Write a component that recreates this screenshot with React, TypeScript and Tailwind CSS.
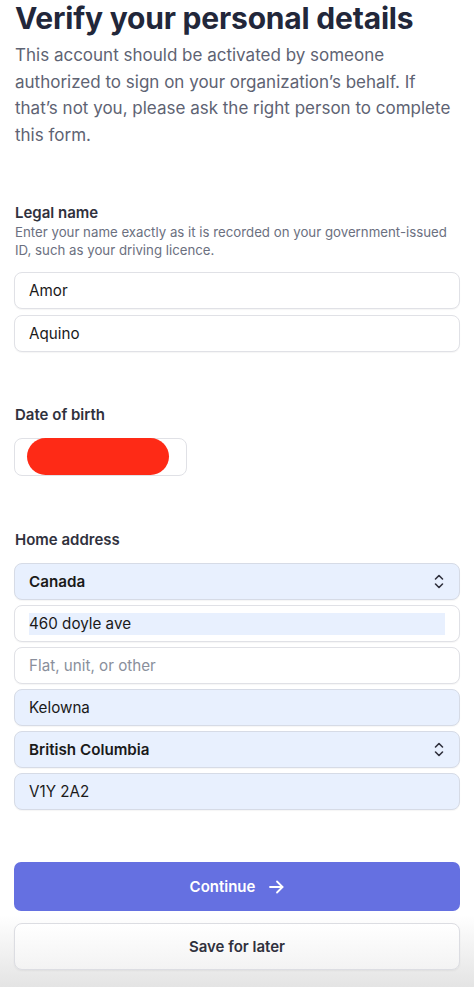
const font = { fontFamily: "Inter, 'Noto Sans', sans-serif" };

const UpDown = () => (
  <svg width="10" height="15" viewBox="0 0 10 15" fill="none" stroke="#30313d" strokeWidth="1.6" strokeLinecap="round" strokeLinejoin="round">
    <path d="M1.5 5 L5 1.5 L8.5 5" />
    <path d="M1.5 10 L5 13.5 L8.5 10" />
  </svg>
);

const Field = ({
  value,
  placeholder,
  filled,
  select,
  bold,
  highlight,
}: {
  value?: string;
  placeholder?: string;
  filled?: boolean;
  select?: boolean;
  bold?: boolean;
  highlight?: boolean;
}) => (
  <div
    className={`w-full h-[37px] rounded-[8px] border flex items-center px-[14px] shadow-[0_1px_1px_rgba(0,0,0,0.04)] ${
      filled ? "bg-[#e8f0fe] border-[#d6dbe6]" : "bg-white border-[#e0e1e6]"
    }`}
  >
    <div className={`flex-1 flex items-center h-[22px] mt-[2px] ${highlight ? "bg-[#e8f0fe]" : ""}`}>
      <span
        className={`text-[15.2px] leading-[20px] ${
          value ? "text-[#1a1a1a]" : "text-[#8a8f9c]"
        } ${bold ? "font-semibold" : ""}`}
      >
        {value ?? placeholder}
      </span>
    </div>
    {select && (
      <div className="ml-[8px] mr-[1px]">
        <UpDown />
      </div>
    )}
  </div>
);

const Label = ({ children }: { children: React.ReactNode }) => (
  <h2 className="text-[15px] leading-[20px] font-semibold text-[#30313d]">{children}</h2>
);

export default function App() {
  return (
    <div className="w-[474px] min-h-[987px] bg-white flex flex-col" style={font}>
      <div className="px-[14px] flex flex-col">
        <h1 className="pl-[1px] text-[30px] leading-[37px] font-bold text-[#22273a] tracking-[-0.2px]">
          Verify your personal details
        </h1>
        <p className="pl-[1px] mt-[5px] text-[17px] leading-[26.7px] text-[#5e6373]">
          This account should be activated by someone
          <br />
          authorized to sign on your organization’s behalf. If
          <br />
          that’s not you, please ask the right person to complete
          <br />
          this form.
        </p>

        <section className="mt-[54px] flex flex-col">
          <div className="pl-[1px]">
            <Label>Legal name</Label>
            <p className="text-[13.25px] leading-[18px] text-[#6b7080]">
              Enter your name exactly as it is recorded on your government-issued
              <br />
              ID, such as your driving licence.
            </p>
          </div>
          <div className="mt-[13px] flex flex-col gap-[6px]">
            <Field value="Amor" />
            <Field value="Aquino" />
          </div>
        </section>

        <section className="mt-[53px] flex flex-col">
          <div className="pl-[1px]">
            <Label>Date of birth</Label>
          </div>
          <div className="mt-[13px] w-[173px] h-[38px] rounded-[8px] border border-[#e0e1e6] bg-white flex items-center pl-[12px]">
            <div className="w-[142px] h-[37px] rounded-full bg-[#fe2a16]" />
          </div>
        </section>

        <section className="mt-[54px] flex flex-col">
          <div className="pl-[1px]">
            <Label>Home address</Label>
          </div>
          <div className="mt-[13px] flex flex-col gap-[5px]">
            <Field value="Canada" filled select bold />
            <Field value="460 doyle ave" highlight />
            <Field placeholder="Flat, unit, or other" />
            <Field value="Kelowna" filled />
            <Field value="British Columbia" filled select bold />
            <Field value="V1Y 2A2" filled />
          </div>
        </section>
      </div>

      <div className="mt-[52px] px-[14px]">
        <button className="w-full h-[49px] rounded-[7px] bg-[#6570e1] text-white text-[15px] font-semibold flex items-center justify-center gap-[14px] pt-[2px]">
          <span>Continue</span>
          <svg width="15" height="14" viewBox="0 0 15 14" fill="none" stroke="white" strokeWidth="1.8" strokeLinecap="round" strokeLinejoin="round">
            <path d="M1 7 H13.5" />
            <path d="M8 1.5 L13.5 7 L8 12.5" />
          </svg>
        </button>
      </div>

      <div className="flex-1 mt-[4px] pt-[8px] pb-[17px] px-[14px] bg-gradient-to-b from-white to-[#e4e4e4]">
        <button className="w-full h-[47px] rounded-[8px] border border-[#dcdde2] bg-gradient-to-b from-white to-[#f3f3f3] text-[15px] font-semibold text-[#30313d] shadow-[0_1px_2px_rgba(0,0,0,0.05)] pt-[2px]">
          Save for later
        </button>
      </div>
    </div>
  );
}
